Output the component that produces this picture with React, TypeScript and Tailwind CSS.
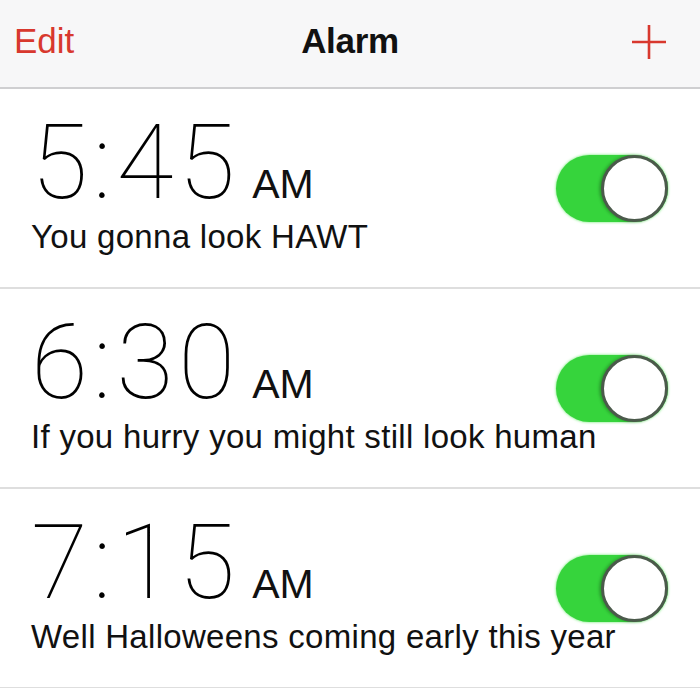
import React from "react";

const alarms = [
  { time: "5:45", label: "You gonna look HAWT" },
  { time: "6:30", label: "If you hurry you might still look human" },
  { time: "7:15", label: "Well Halloweens coming early this year" },
];

const Toggle = () => {
  return (
    <div className="relative shrink-0 w-[112px] h-[67px] rounded-full bg-[#36d43c] shadow-[0_0_3px_#5ee862]">
      <div className="absolute right-0 top-0 w-[67px] h-[67px] rounded-full bg-white border-[3px] border-[#4b5a4b] shadow-[-2px_0_3px_rgba(0,0,0,0.25)]"></div>
    </div>
  );
};

const App = () => {
  return (
    <div className="w-[700px] h-[688px] bg-white overflow-hidden font-['Liberation_Sans',Arial,sans-serif]">
      <div className="h-[89px] bg-[#f7f7f8] border-b-2 border-[#cfcfd1] flex items-center justify-between px-[14px] pb-[4px]">
        <span className="text-[35px] text-[#d8382e] w-[120px]">Edit</span>
        <span className="text-[35px] font-bold text-[#111] tracking-[-0.3px]">Alarm</span>
        <div className="w-[120px] flex justify-end pr-[18px]">
          <svg width="38" height="38" viewBox="0 0 38 38">
            <path d="M19 2 V36 M2 19 H36" stroke="#d8382e" strokeWidth="2.6" />
          </svg>
        </div>
      </div>

      {alarms.map((a) => (
        <div
          key={a.time}
          className="h-[200px] border-b-2 border-[#dedede] flex items-center pl-[31px] pr-[32px]"
        >
          <div className="flex-1 min-w-0 flex flex-col self-start pt-[22px] whitespace-nowrap">
            <div className="flex items-baseline">
              <span className="font-['Roboto',sans-serif] font-thin text-[104px] leading-none text-black tracking-[5px]">
                {a.time}
              </span>
              <span className="text-[41px] leading-none text-[#111] ml-[12px]">
                AM
              </span>
            </div>
            <span className="text-[33px] leading-none text-[#111] mt-[5px] tracking-[0.3px]">
              {a.label}
            </span>
          </div>
          <Toggle />
        </div>
      ))}
    </div>
  );
};

export default App;
